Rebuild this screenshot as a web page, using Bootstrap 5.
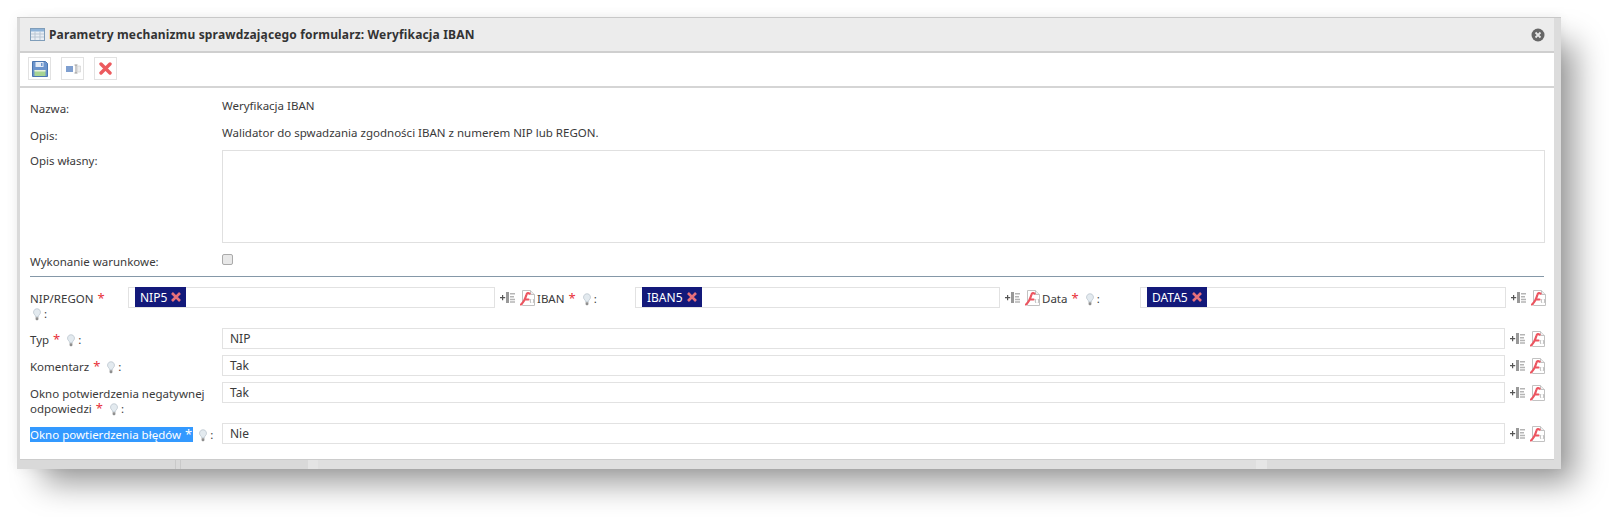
<!DOCTYPE html>
<html lang="pl">
  <head>
    <meta charset="UTF-8" />
    <meta name="viewport" content="width=device-width, initial-scale=1.0" />
    <title>Weryfikacja IBAN</title>
    <link href="https://cdn.jsdelivr.net/npm/bootstrap@5.3.3/dist/css/bootstrap.min.css" rel="stylesheet" />
    <style>
      body {
        background: #fff;
        font-family: "Noto Sans", sans-serif;
        font-size: 11.5px;
        color: #3a3a3a;
        padding: 17px 48px 0 17px;
        min-height: 517px;
      }
      .dlg-frame {
        height: 452px;
        padding: 0 7px 9px 3px;
        background-color: #d9d9d9;
        background-image: linear-gradient(to right, transparent 158px, #c9c9c9 158px, #c9c9c9 159px, transparent 159px, transparent 163px, #c9c9c9 163px, #c9c9c9 164px, transparent 164px, transparent 291px, #e4e4e4 291px, #e4e4e4 301px, #dfdfdf 301px, #dfdfdf 1239px, #e6e6e6 1239px, #e6e6e6 1250px, #dcdcdc 1250px);
        border-top: 1px solid #c8c8c8;
        box-shadow: 20px 20px 30px -6px rgba(0, 0, 0, .4), 0 0 12px rgba(0, 0, 0, .06);
      }
      .dlg-window { height: 100%; background: #fff; border-bottom: 1px solid #ccc; }
      .dlg-head {
        height: 35px;
        padding: 0 9px 0 10px;
        background: #ececec;
        border-bottom: 2px solid #cfcfcf;
      }
      .dlg-title { font-size: 12px; font-weight: 700; letter-spacing: .16px; color: #333; margin-left: 4px; }
      .dlg-tools { height: 35px; padding: 0 8px 2px; gap: 10px; border-bottom: 2px solid #d5d5d5; flex: none; }
      .tool-btn {
        width: 23px;
        height: 23px;
        border: 1px solid #e2e2e2;
        background: #fff;
        padding: 0;
      }
      .dlg-body { padding: 0 6px 0 10px; }
      .lbl-col { width: 192px; flex: none; }
      .plain-row { height: 27px; padding-top: 7px; }
      .first-row { height: 32px; padding-top: 12px; }
      .val-text { margin-top: -3px; }
      .memo-box {
        width: 1323px;
        height: 93px;
        border: 1px solid #e0e0e0;
        margin-top: -2px;
      }
      .memo-row { height: 103px; padding-top: 5px; }
      .check-box {
        display: block;
        width: 11px;
        height: 11px;
        background: #e8e8e8;
        border: 1px solid #aaa;
        border-radius: 2px;
        margin-top: 1px;
      }
      .check-row { height: 26px; padding-top: 3px; }
      .dlg-rule { height: 1px; background: #8598a8; margin-right: 4px; }
      .field-box {
        height: 21px;
        line-height: 19px;
        border: 1px solid #e2e2e2;
        padding-left: 7px;
        font-size: 12px;
      }
      .triple-row { height: 51px; padding-top: 10px; }
      .lbl-a, .lbl-b, .lbl-c { width: 98px; flex: none; line-height: 15px; padding-top: 4px; }
      .box-a { width: 367px; flex: none; }
      .box-b { width: 365px; flex: none; }
      .box-c { width: 366px; flex: none; }
      .act-icons { width: 42px; flex: none; gap: 4px; height: 21px; padding-left: 5px; }
      .req-star { color: #e8303a; font-weight: 400; font-size: 13px; line-height: 1; margin: 0 1px; }
      .var-tag {
        display: inline-flex;
        align-items: center;
        gap: 4px;
        height: 20px;
        margin: -1px 0 0 6px;
        padding: 0 5px;
        background: #13197a;
        color: #fff;
        vertical-align: top;
      }
      .boxed-tag { padding-left: 0; }
      .one-row { padding-bottom: 6px; }
      .tall-row { padding-bottom: 7px; }
      .one-row .lbl-col { line-height: 15px; padding-top: 4px; }
      .one-row .field-box { width: 1283px; flex: none; }
      .sel-text { background: #3399ff; color: #fff; }
      .sel-text .req-star { color: #fff; }
      .bulb-ico { vertical-align: -3px; margin: 0 2px; }
      .act-icons svg { filter: blur(.3px); }
    </style>
  </head>
  <body>
    <svg width="0" height="0" class="d-block" aria-hidden="true">
      <symbol id="ico-bulb" viewBox="0 0 10 13">
        <path d="M5 .7a3.500 3.500 0 0 0-2.200 6.200c.5.5.7 1 .7 1.700h3c0-.7.2-1.200.7-1.700A3.500 3.500 0 0 0 5 .7z" fill="#e3eaef" stroke="#bcc7cf" stroke-width=".8" />
        <path d="M3.600 9.200h2.800v2.200l-.8.9H4.400l-.8-.9z" fill="#8f8f8f" />
      </symbol>
      <symbol id="ico-map" viewBox="0 0 16 13">
        <path d="M0 6h2V4h1.200v2h2v1.200h-2v2H2V7.200H0z" fill="#555" />
        <path d="M6 1h3v11H6z" fill="#999" />
        <path d="M10 2h5v1.500h-5zM10 5h4v1.500h-4zM10 7.700h5v1.500h-5zM10 10.300h5v1.500h-5z" fill="#b5b5b5" />
      </symbol>
      <symbol id="ico-pdf" viewBox="0 0 15 16">
        <path d="M2.500.5h8l4 4v11h-12z" fill="#fff" stroke="#c2c2c2" />
        <path d="M10.500.5v4h4" fill="#eee" stroke="#c2c2c2" />
        <path d="M1 14.500C4 12 5.500 8 6.500 4.500c.4-1.600 2-1.600 3-.8M5 9.500h3.500" fill="none" stroke="#ec5560" stroke-width="2.200" stroke-linecap="round" />
        <path d="M11 9c-1 1-1 3 0 4M13 9c1 1 1 3 0 4" fill="none" stroke="#aaa" stroke-width=".8" />
      </symbol>
    </svg>

    <div class="dlg-frame">
      <div class="dlg-window d-flex flex-column">
        <div class="dlg-head d-flex align-items-center flex-none">
          <svg width="15" height="13" viewBox="0 0 15 13">
            <rect x=".5" y=".5" width="14" height="12" fill="#e8eef5" stroke="#7f9db9" />
            <path d="M1 1h13v2.500H1z" fill="#8fb4d9" />
            <path d="M1 6h13M1 9h13M5 3.500V12M10 3.500V12" stroke="#b9c6d3" />
          </svg>
          <span class="dlg-title">Parametry mechanizmu sprawdzającego formularz: Weryfikacja IBAN</span>
          <svg class="ms-auto" width="14" height="14" viewBox="0 0 14 14">
            <circle cx="7" cy="7" r="6.500" fill="#666" />
            <path d="M4.500 4.500l5 5M9.500 4.500l-5 5" stroke="#e6e6e6" stroke-width="1.800" />
          </svg>
        </div>
        <div class="dlg-tools d-flex align-items-center">
          <button type="button" class="tool-btn d-flex align-items-center justify-content-center">
            <svg width="16" height="16" viewBox="0 0 16 16">
              <path d="M.5.500h13l2 2v13H.5z" fill="#6b94cc" stroke="#4a76b0" />
              <path d="M3.500 1h8v5h-8z" fill="#e4ecf6" />
              <path d="M9 2h1.500v3H9z" fill="#6b94cc" />
              <path d="M2.500 9h11v6h-11z" fill="#a8d494" />
              <path d="M2.500 9h11v1.500h-11z" fill="#e8f2e0" />
            </svg>
          </button>
          <button type="button" class="tool-btn d-flex align-items-center justify-content-center">
            <svg width="16" height="10" viewBox="0 0 16 10">
              <path d="M1 2h7v6H1z" fill="#7f9fd0" />
              <path d="M9.500 1h3M9.500 9h3M11 1v8" stroke="#999" fill="none" />
              <path d="M12.500 2h3v6h-3z" fill="#eee" stroke="#ccc" stroke-width=".6" />
            </svg>
          </button>
          <button type="button" class="tool-btn d-flex align-items-center justify-content-center">
            <svg width="13" height="13" viewBox="0 0 13 13">
              <path d="M2 2l9 9M11 2l-9 9" stroke="#ec5a5e" stroke-width="3.400" stroke-linecap="round" />
            </svg>
          </button>
        </div>

        <div class="dlg-body flex-grow-1">
          <div class="plain-row first-row d-flex">
            <div class="lbl-col">Nazwa:</div>
            <div class="val-text">Weryfikacja IBAN</div>
          </div>
          <div class="plain-row d-flex">
            <div class="lbl-col">Opis:</div>
            <div class="val-text">Walidator do spwadzania zgodności IBAN z numerem NIP lub REGON.</div>
          </div>
          <div class="memo-row d-flex">
            <div class="lbl-col">Opis własny:</div>
            <div class="memo-box"></div>
          </div>
          <div class="check-row d-flex">
            <div class="lbl-col">Wykonanie warunkowe:</div>
            <span class="check-box"></span>
          </div>
          <div class="dlg-rule"></div>

          <div class="triple-row d-flex">
            <div class="lbl-a">NIP/REGON <span class="req-star">*</span><br /><svg class="bulb-ico" width="10" height="13"><use href="#ico-bulb" /></svg>:</div>
            <div class="field-box box-a boxed-tag"><span class="var-tag">NIP5 <svg width="10" height="10" viewBox="0 0 10 10"><path d="M1 1l8 8M9 1l-8 8" stroke="#e8707a" stroke-width="2.600" /></svg></span></div>
            <div class="act-icons d-flex align-items-center"><svg width="16" height="13"><use href="#ico-map" /></svg><svg width="15" height="16"><use href="#ico-pdf" /></svg></div>
            <div class="lbl-b">IBAN <span class="req-star">*</span> <svg class="bulb-ico" width="10" height="13"><use href="#ico-bulb" /></svg>:</div>
            <div class="field-box box-b boxed-tag"><span class="var-tag">IBAN5 <svg width="10" height="10" viewBox="0 0 10 10"><path d="M1 1l8 8M9 1l-8 8" stroke="#e8707a" stroke-width="2.600" /></svg></span></div>
            <div class="act-icons d-flex align-items-center"><svg width="16" height="13"><use href="#ico-map" /></svg><svg width="15" height="16"><use href="#ico-pdf" /></svg></div>
            <div class="lbl-c">Data <span class="req-star">*</span> <svg class="bulb-ico" width="10" height="13"><use href="#ico-bulb" /></svg>:</div>
            <div class="field-box box-c boxed-tag"><span class="var-tag">DATA5 <svg width="10" height="10" viewBox="0 0 10 10"><path d="M1 1l8 8M9 1l-8 8" stroke="#e8707a" stroke-width="2.600" /></svg></span></div>
            <div class="act-icons d-flex align-items-center"><svg width="16" height="13"><use href="#ico-map" /></svg><svg width="15" height="16"><use href="#ico-pdf" /></svg></div>
          </div>

          <div class="one-row d-flex">
            <div class="lbl-col">Typ <span class="req-star">*</span> <svg class="bulb-ico" width="10" height="13"><use href="#ico-bulb" /></svg>:</div>
            <div class="field-box">NIP</div>
            <div class="act-icons d-flex align-items-center"><svg width="16" height="13"><use href="#ico-map" /></svg><svg width="15" height="16"><use href="#ico-pdf" /></svg></div>
          </div>
          <div class="one-row d-flex">
            <div class="lbl-col">Komentarz <span class="req-star">*</span> <svg class="bulb-ico" width="10" height="13"><use href="#ico-bulb" /></svg>:</div>
            <div class="field-box">Tak</div>
            <div class="act-icons d-flex align-items-center"><svg width="16" height="13"><use href="#ico-map" /></svg><svg width="15" height="16"><use href="#ico-pdf" /></svg></div>
          </div>
          <div class="one-row tall-row d-flex">
            <div class="lbl-col">Okno potwierdzenia negatywnej odpowiedzi <span class="req-star">*</span> <svg class="bulb-ico" width="10" height="13"><use href="#ico-bulb" /></svg>:</div>
            <div class="field-box">Tak</div>
            <div class="act-icons d-flex align-items-center"><svg width="16" height="13"><use href="#ico-map" /></svg><svg width="15" height="16"><use href="#ico-pdf" /></svg></div>
          </div>
          <div class="one-row d-flex">
            <div class="lbl-col"><span class="sel-text">Okno powtierdzenia błędów <span class="req-star">*</span></span> <svg class="bulb-ico" width="10" height="13"><use href="#ico-bulb" /></svg>:</div>
            <div class="field-box">Nie</div>
            <div class="act-icons d-flex align-items-center"><svg width="16" height="13"><use href="#ico-map" /></svg><svg width="15" height="16"><use href="#ico-pdf" /></svg></div>
          </div>
        </div>
      </div>
    </div>
    <script src="https://cdn.jsdelivr.net/npm/bootstrap@5.3.3/dist/js/bootstrap.bundle.min.js"></script>
  </body>
</html>
